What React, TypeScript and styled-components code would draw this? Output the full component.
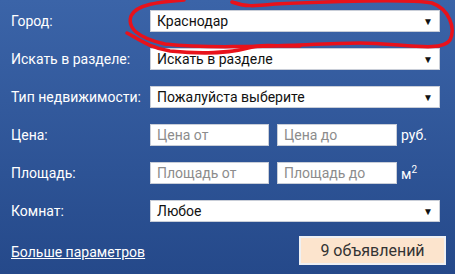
import React from 'react';
import styled, { createGlobalStyle } from 'styled-components';

const GlobalStyle = createGlobalStyle`
  html, body {
    margin: 0;
    padding: 0;
  }
  body {
    font-family: Roboto, "Liberation Sans", Arial, sans-serif;
  }
`;

const Panel = styled.div`
  position: relative;
  box-sizing: border-box;
  width: 455px;
  height: 274px;
  padding: 10px 15px 0 11px;
  background: linear-gradient(to bottom, #3b64a8, #25498a);
  display: flex;
  flex-direction: column;
  gap: 16px;
  overflow: hidden;
`;

const Row = styled.div`
  display: flex;
  align-items: center;
  height: 22px;
`;

const Label = styled.div`
  width: 139px;
  flex: none;
  color: #fff;
  font-size: 14px;
`;

const Select = styled.div`
  box-sizing: border-box;
  width: 290px;
  height: 22px;
  background: #fff;
  border: 1px solid #c9ced8;
  display: flex;
  align-items: center;
  justify-content: space-between;
  padding: 0 6px 0 6px;
  font-size: 14px;
  color: #111;
`;

const Arrow = styled.span`
  font-size: 10px;
  color: #111;
`;

const Field = styled.input<{ $w: number }>`
  box-sizing: border-box;
  width: ${(p) => p.$w}px;
  height: 22px;
  margin: 0 8px 0 0;
  border: 1px solid #c9ced8;
  background: #fff;
  padding: 0 6px;
  font-family: inherit;
  font-size: 14px;
  outline: none;
  &::placeholder {
    color: #8c8c8c;
  }
`;

const Unit = styled.span`
  color: #fff;
  font-size: 14px;
  margin-left: -4px;
  sup {
    font-size: 10px;
    vertical-align: 6px;
  }
`;

const Footer = styled.div`
  display: flex;
  align-items: center;
  justify-content: space-between;
  margin-top: -2px;
  margin-right: -6px;
`;

const MoreLink = styled.a`
  color: #fff;
  font-size: 14px;
  text-decoration: underline;
  cursor: pointer;
  margin-top: 3px;
`;

const SubmitButton = styled.button`
  box-sizing: border-box;
  width: 147px;
  height: 29px;
  background: #fce4cd;
  border: 2px solid #eef0f4;
  font-family: inherit;
  font-size: 16px;
  color: #333;
  padding: 0;
`;

const Scribble = styled.svg`
  position: absolute;
  left: 0;
  top: 0;
  pointer-events: none;
`;

const App = () => {
  return (
    <>
      <GlobalStyle />
      <Panel>
        <Row>
          <Label>Город:</Label>
          <Select>
            Краснодар<Arrow>▼</Arrow>
          </Select>
        </Row>
        <Row>
          <Label>Искать в разделе:</Label>
          <Select>
            Искать в разделе<Arrow>▼</Arrow>
          </Select>
        </Row>
        <Row>
          <Label>Тип недвижимости:</Label>
          <Select>
            Пожалуйста выберите<Arrow>▼</Arrow>
          </Select>
        </Row>
        <Row>
          <Label>Цена:</Label>
          <Field $w={119} placeholder="Цена от" />
          <Field $w={120} placeholder="Цена до" />
          <Unit>руб.</Unit>
        </Row>
        <Row>
          <Label>Площадь:</Label>
          <Field $w={119} placeholder="Площадь от" />
          <Field $w={120} placeholder="Площадь до" />
          <Unit>
            м<sup>2</sup>
          </Unit>
        </Row>
        <Row>
          <Label>Комнат:</Label>
          <Select>
            Любое<Arrow>▼</Arrow>
          </Select>
        </Row>
        <Footer>
          <MoreLink>Больше параметров</MoreLink>
          <SubmitButton>9 объявлений</SubmitButton>
        </Footer>
        <Scribble width="455" height="70" viewBox="0 0 455 70">
          <path
            d="M 184 0 C 160 2, 136 4, 131 16 C 127 28, 138 38, 165 44 C 220 50, 300 44, 360 43 C 400 43, 442 53, 450 40 C 456 28, 449 9, 432 3 C 405 -2, 320 2, 275 4 C 255 6, 245 7, 232 2"
            fill="none"
            stroke="#e8121b"
            strokeWidth="3.5"
            strokeLinecap="round"
          />
          <path
            d="M 127 33 C 140 40, 150 48, 170 51 C 200 54, 230 53, 248 48 C 262 44, 270 46, 300 46"
            fill="none"
            stroke="#e8121b"
            strokeWidth="3.5"
            strokeLinecap="round"
          />
        </Scribble>
      </Panel>
    </>
  );
};

export default App;
